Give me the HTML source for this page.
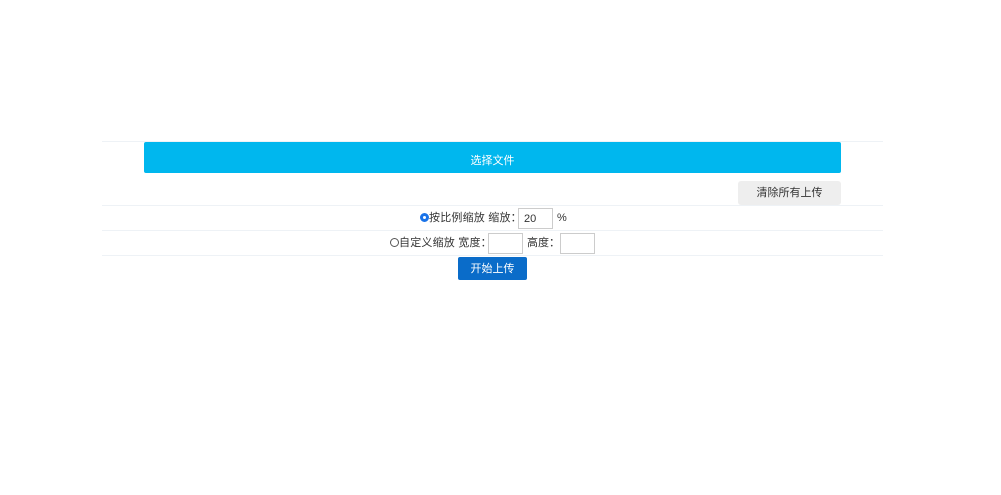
<!DOCTYPE html>
<html><head><meta charset="utf-8"><style>
body{margin:0;width:1001px;height:495px;background:#fff;position:relative;font-family:"Liberation Sans","Noto Sans CJK SC",sans-serif;font-size:11px;color:#333;overflow:hidden}
.a{position:absolute}
.ln{position:absolute;left:102px;width:781px;height:1px;background:#eef2f6}
.in{position:absolute;border:1px solid #ccc;box-sizing:border-box;background:#fff}
.r{position:absolute;width:9px;height:9px;border:1px solid #555;border-radius:50%;box-sizing:border-box}
</style></head><body>
<div class="ln" style="top:141px"></div>
<div class="a" style="left:144px;top:142px;width:697px;height:31px;background:#00b7ee;border-radius:2px;color:#fff;text-align:center;line-height:39px">选择文件</div>
<div class="a" style="left:738px;top:181px;width:103px;height:24px;background:#eee;border-radius:3px;text-align:center;line-height:25px">清除所有上传</div>
<div class="ln" style="top:205px"></div>
<div class="r" style="left:420px;top:213px;border:3px solid #1a73e8;background:#fff;width:9px;height:9px"></div>
<div class="a" style="left:429px;top:211px;line-height:15px;letter-spacing:0.2px">按比例缩放 缩放：</div>
<div class="in" style="left:518px;top:208px;width:35px;height:21px;padding-left:5px;line-height:20px">20</div>
<div class="a" style="left:557px;top:211px;line-height:15px">%</div>
<div class="ln" style="top:230px"></div>
<div class="r" style="left:390px;top:238px"></div>
<div class="a" style="left:399px;top:236px;line-height:15px;letter-spacing:0.2px">自定义缩放 宽度：</div>
<div class="in" style="left:488px;top:233px;width:35px;height:21px"></div>
<div class="a" style="left:527px;top:236px;line-height:15px">高度：</div>
<div class="in" style="left:560px;top:233px;width:35px;height:21px"></div>
<div class="ln" style="top:255px"></div>
<div class="a" style="left:458px;top:257px;width:69px;height:23px;background:#0a6cc9;border-radius:2px;color:#fff;text-align:center;line-height:25px">开始上传</div>
</body></html>
